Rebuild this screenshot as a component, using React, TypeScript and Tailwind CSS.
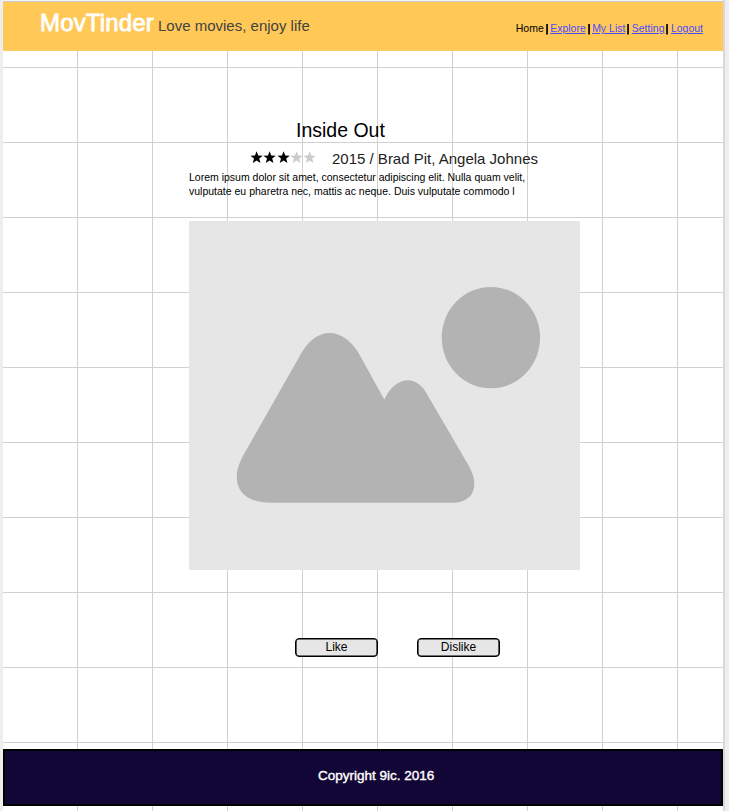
const links = ["Explore", "My List", "Setting", "Logout"];

function Star({ on }: { on: boolean }) {
  return (
    <svg className={on ? "h-[13px] w-[13.25px] text-black" : "h-[13px] w-[13.25px] text-[#cccccc]"} viewBox="0 0 13.25 13">
      <path
        fill="currentColor"
        d="M6.6 0.2 L8.25 4.5 L12.8 4.7 L9.2 7.5 L10.45 12 L6.6 9.5 L2.75 12 L4 7.5 L0.4 4.7 L4.95 4.5 Z"
      />
    </svg>
  );
}

function Header() {
  return (
    <header className="flex h-[49px] shrink-0 justify-between border-b border-[#fdcb66] bg-[#ffc857] pl-[37px] pr-5">
      <div className="flex whitespace-nowrap">
        <h1 className="w-[118px] pt-[6px] text-[24px] leading-[30px] tracking-[0.15px] text-white [-webkit-text-stroke:0.8px_white]">MovTinder</h1>
        <p className="pt-[15px] text-[15px] leading-[18px] text-[#434343]">Love movies, enjoy life</p>
      </div>
      <nav className="flex pt-[20px] text-[10.5px] leading-[13px] whitespace-nowrap">
        <span className="text-black">Home</span>
        {links.map((l) => (
          <span key={l} className="flex">
            <svg className="mt-[2px] h-[11px] w-[6.4px]" viewBox="0 0 6.4 11">
              <rect x="2.2" y="0" width="1.7" height="10.5" fill="black" />
            </svg>
            <a className="text-[#4a4cff] underline">{l}</a>
          </span>
        ))}
      </nav>
    </header>
  );
}

function Placeholder() {
  return (
    <svg className="ml-[186px] mt-[23px] h-[349px] w-[391px] shrink-0 bg-[#e6e6e6]" viewBox="189 221 391 349">
      <ellipse cx="490.9" cy="337.6" rx="49.2" ry="50.7" fill="#b3b3b3" />
      <path
        fill="#b3b3b3"
        d="M302 352 C317 326.5 342 326.5 358 352 L384.3 399.5 C396 375 417 374.5 427.5 395 L469.5 467 C480 487 473 502.8 452 502.8 L271 502.8 C237 502.8 229 480 244 454 Z"
      />
    </svg>
  );
}

function Button({ label }: { label: string }) {
  return (
    <button className="h-[19px] w-[83px] rounded-[4px] border border-black bg-[#e6e6e6] text-[12px] leading-[15px] text-black shadow-[inset_0_0_0_0.6px_black]">
      {label}
    </button>
  );
}

export default function App() {
  return (
    <div className="h-[811px] w-[729px] overflow-hidden bg-[#eeeeee] pl-[3px] font-['Liberation_Sans',Arial,sans-serif]">
      <div className="flex h-[811px] w-[722px] border-r-2 border-[#d8d8d8]">
        <div className="flex h-[811px] w-[720px] flex-col bg-white bg-[linear-gradient(to_right,transparent_74px,#d0d0d0_74px),linear-gradient(to_bottom,transparent_74px,#d0d0d0_74px)] bg-[length:75px_75px] bg-[position:0_-7px]">
          <div className="h-[2px] shrink-0 border-b border-[#cccccc] bg-[#f3f3f3]" />
          <Header />
          <main className="flex h-[698px] shrink-0 flex-col whitespace-nowrap text-black">
            <h2 className="ml-[293px] mt-[67px] text-[19.5px] leading-[24px]">Inside Out</h2>
            <div className="ml-[247px] mt-[8px] flex h-[18px]">
              <div className="flex w-[82px] pt-[1px]">
                {[1, 2, 3, 4, 5].map((n) => (
                  <Star key={n} on={n <= 3} />
                ))}
              </div>
              <p className="text-[15px] leading-[18px] text-[#222222]">2015 / Brad Pit, Angela Johnes</p>
            </div>
            <p className="ml-[186px] mt-[2px] text-[10.5px] leading-[14px]">
              Lorem ipsum dolor sit amet, consectetur adipiscing elit. Nulla quam velit,
              <br />
              vulputate eu pharetra nec, mattis ac neque. Duis vulputate commodo l
            </p>
            <Placeholder />
            <div className="ml-[292px] mt-[68px] flex gap-[39px]">
              <Button label="Like" />
              <Button label="Dislike" />
            </div>
          </main>
          <footer className="h-[57px] shrink-0 border-2 border-black bg-[#120636] pl-[313px] pt-[16px] text-[13.5px] leading-[18px] whitespace-nowrap text-white [-webkit-text-stroke:0.4px_white]">
            Copyright 9ic. 2016
          </footer>
        </div>
      </div>
    </div>
  );
}
